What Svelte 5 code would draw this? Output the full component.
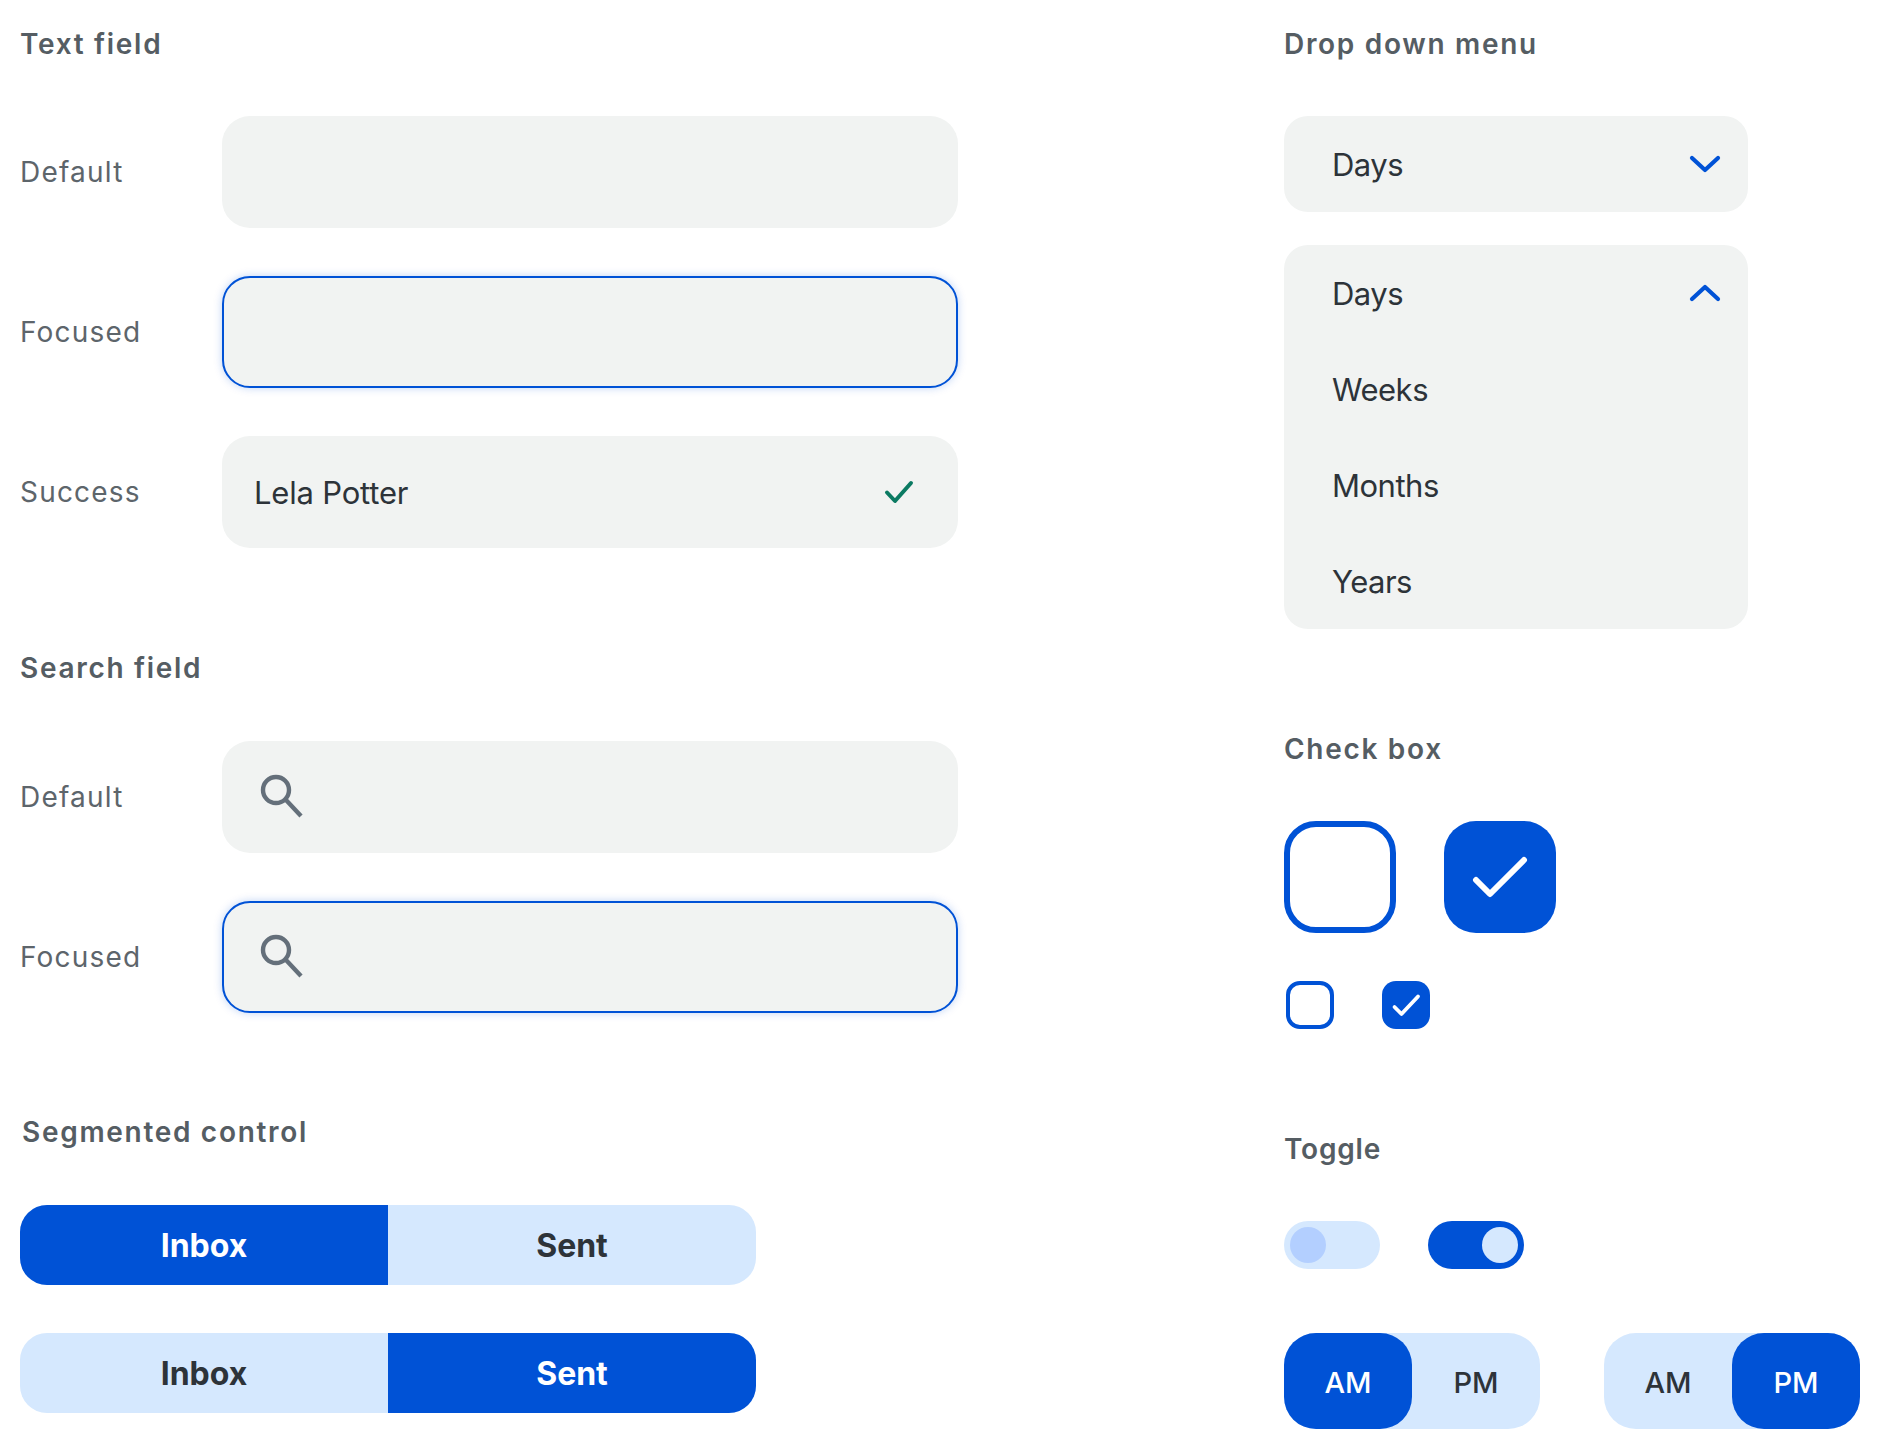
<script>
  const textStates = [
    { label: 'Default', state: '' },
    { label: 'Focused', state: 'focused' },
    { label: 'Success', state: 'success' },
  ];
  const searchStates = [
    { label: 'Default', state: '' },
    { label: 'Focused', state: 'focused' },
  ];
  const options = ['Weeks', 'Months', 'Years'];
</script>

{#snippet check(size, stroke, d)}
  <svg width={size} height={size} viewBox="0 0 {size} {size}" fill="none">
    <path {d} stroke="#fff" stroke-width={stroke} stroke-linecap="round" stroke-linejoin="round" />
  </svg>
{/snippet}

<main class="board">
  <div class="col left">
    <h2>Text field</h2>
    <div class="rows">
      {#each textStates as row}
        <div class="row">
          <span class="label">{row.label}</span>
          <div class="field {row.state}">
            {#if row.state === 'success'}
              <span class="value">Lela Potter</span>
              <svg class="ok" width="30" height="24" viewBox="0 0 30 24" fill="none">
                <path d="M3 12.5l8 8.5L27 3" stroke="#0b7a62" stroke-width="4" stroke-linecap="round" stroke-linejoin="round" />
              </svg>
            {/if}
          </div>
        </div>
      {/each}
    </div>

    <h2 class="next search-title">Search field</h2>
    <div class="rows">
      {#each searchStates as row}
        <div class="row">
          <span class="label">{row.label}</span>
          <div class="field search {row.state}">
            <svg width="46" height="46" viewBox="0 0 46 46" fill="none">
              <circle cx="18" cy="16" r="13" stroke="#646f7a" stroke-width="4.4" />
              <path d="M28 26l15 16" stroke="#646f7a" stroke-width="4.4" />
            </svg>
          </div>
        </div>
      {/each}
    </div>

    <h2 class="next seg-title">Segmented control</h2>
    <div class="segments">
      <div class="segmented">
        <span class="on">Inbox</span>
        <span>Sent</span>
      </div>
      <div class="segmented">
        <span>Inbox</span>
        <span class="on">Sent</span>
      </div>
    </div>
  </div>

  <div class="col right">
    <h2>Drop down menu</h2>
    <div class="dropdowns">
      <div class="dropdown">
        <div class="option">
          Days
          <svg width="32" height="20" viewBox="0 0 32 20" fill="none">
            <path d="M3 4l13 12L29 4" stroke="#0052d6" stroke-width="4.2" stroke-linecap="round" stroke-linejoin="round" />
          </svg>
        </div>
      </div>
      <div class="dropdown">
        <div class="option">
          Days
          <svg width="32" height="20" viewBox="0 0 32 20" fill="none">
            <path d="M3 16L16 4l13 12" stroke="#0052d6" stroke-width="4.2" stroke-linecap="round" stroke-linejoin="round" />
          </svg>
        </div>
        {#each options as option}
          <div class="option">{option}</div>
        {/each}
      </div>
    </div>

    <h2 class="next">Check box</h2>
    <div class="checks big">
      <div class="box"></div>
      <div class="box checked">{@render check(112, 6, 'M32 59l14 14 34-34')}</div>
    </div>
    <div class="checks small">
      <div class="box"></div>
      <div class="box checked">{@render check(48, 3.8, 'M12.5 26l7 7L36 15.5')}</div>
    </div>

    <h2 class="next toggle-title">Toggle</h2>
    <div class="toggles">
      <div class="toggle"><span class="knob"></span></div>
      <div class="toggle on"><span class="knob"></span></div>
    </div>

    <div class="ampm-row">
      <div class="ampm">
        <span class="on">AM</span>
        <span>PM</span>
      </div>
      <div class="ampm">
        <span>AM</span>
        <span class="on">PM</span>
      </div>
    </div>
  </div>
</main>

<style>
  :global(body) {
    margin: 0;
    background: #fff;
  }
  .board {
    display: grid;
    grid-template-columns: 1284px 596px;
    width: 1880px;
    height: 1448px;
    box-sizing: border-box;
    padding-top: 24px;
    font-family: Inter, "Liberation Sans", sans-serif;
    color: #2d3339;
  }
  .col {
    display: flex;
    flex-direction: column;
  }
  .left {
    padding-left: 20px;
  }
  h2 {
    margin: 0 0 52px;
    height: 40px;
    line-height: 40px;
    font-size: 28px;
    font-weight: 600;
    letter-spacing: 1.7px;
    color: #555d63;
  }
  h2.next {
    margin-top: 100px;
  }
  h2.search-title {
    margin-bottom: 53px;
  }
  h2.seg-title {
    margin-top: 99px;
    margin-bottom: 53px;
    padding-left: 2px;
  }
  .rows {
    display: flex;
    flex-direction: column;
    gap: 48px;
  }
  .row {
    display: flex;
    align-items: center;
  }
  .label {
    width: 202px;
    font-size: 28px;
    letter-spacing: 1.2px;
    color: #5d656b;
  }
  .field {
    display: flex;
    align-items: center;
    justify-content: space-between;
    box-sizing: border-box;
    width: 736px;
    height: 112px;
    padding: 0 44px 0 32px;
    border-radius: 28px;
    background: #f1f3f2;
  }
  .field.focused {
    border: 2px solid #0052d6;
    box-shadow: 0 0 8px rgba(0, 82, 214, 0.25);
  }
  .field.search {
    padding-left: 36px;
  }
  .field.search.focused {
    padding-left: 34px;
  }
  .value {
    font-size: 31px;
    letter-spacing: -0.2px;
  }
  .segments {
    display: flex;
    flex-direction: column;
    gap: 48px;
  }
  .segmented {
    display: grid;
    grid-template-columns: 1fr 1fr;
    width: 736px;
    height: 80px;
    overflow: hidden;
    border-radius: 27px;
    background: #d5e8fe;
  }
  .segmented span {
    display: flex;
    align-items: center;
    justify-content: center;
    font-size: 32px;
    font-weight: 700;
  }
  .segmented .on {
    background: #0052d6;
    color: #fff;
  }
  .dropdowns {
    display: flex;
    flex-direction: column;
    gap: 33px;
  }
  .dropdown {
    width: 464px;
    border-radius: 24px;
    background: #f1f3f2;
  }
  .option {
    display: flex;
    align-items: center;
    justify-content: space-between;
    height: 96px;
    padding: 0 27px 0 48px;
    font-size: 31px;
    letter-spacing: -0.5px;
  }
  .checks {
    display: flex;
  }
  .box {
    box-sizing: border-box;
    border: solid #0052d6;
  }
  .box svg {
    display: block;
  }
  .box.checked {
    border: 0;
    background: #0052d6;
  }
  .big {
    gap: 48px;
  }
  .big .box {
    width: 112px;
    height: 112px;
    border-width: 6px;
    border-radius: 32px;
  }
  .small {
    gap: 48px;
    margin-top: 48px;
    padding-left: 2px;
  }
  .small .box {
    width: 48px;
    height: 48px;
    border-width: 4px;
    border-radius: 14px;
  }
  h2.toggle-title {
    margin-top: 100px;
    letter-spacing: 0.8px;
  }
  .toggles {
    display: flex;
    gap: 48px;
  }
  .toggle {
    display: flex;
    align-items: center;
    box-sizing: border-box;
    width: 96px;
    height: 48px;
    padding: 0 6px;
    border-radius: 24px;
    background: #d5e8fe;
  }
  .knob {
    width: 36px;
    height: 36px;
    border-radius: 50%;
    background: #b3cfff;
  }
  .toggle.on {
    justify-content: flex-end;
    background: #0052d6;
  }
  .toggle.on .knob {
    background: #d5e8fe;
  }
  .ampm-row {
    display: flex;
    gap: 64px;
    margin-top: 64px;
  }
  .ampm {
    display: grid;
    grid-template-columns: 1fr 1fr;
    width: 256px;
    height: 96px;
    border-radius: 32px;
    background: #d5e8fe;
  }
  .ampm span {
    display: flex;
    align-items: center;
    justify-content: center;
    padding-top: 2px;
    border-radius: 32px;
    font-size: 29px;
    font-weight: 500;
  }
  .ampm .on {
    background: #0052d6;
    color: #fff;
  }
</style>
